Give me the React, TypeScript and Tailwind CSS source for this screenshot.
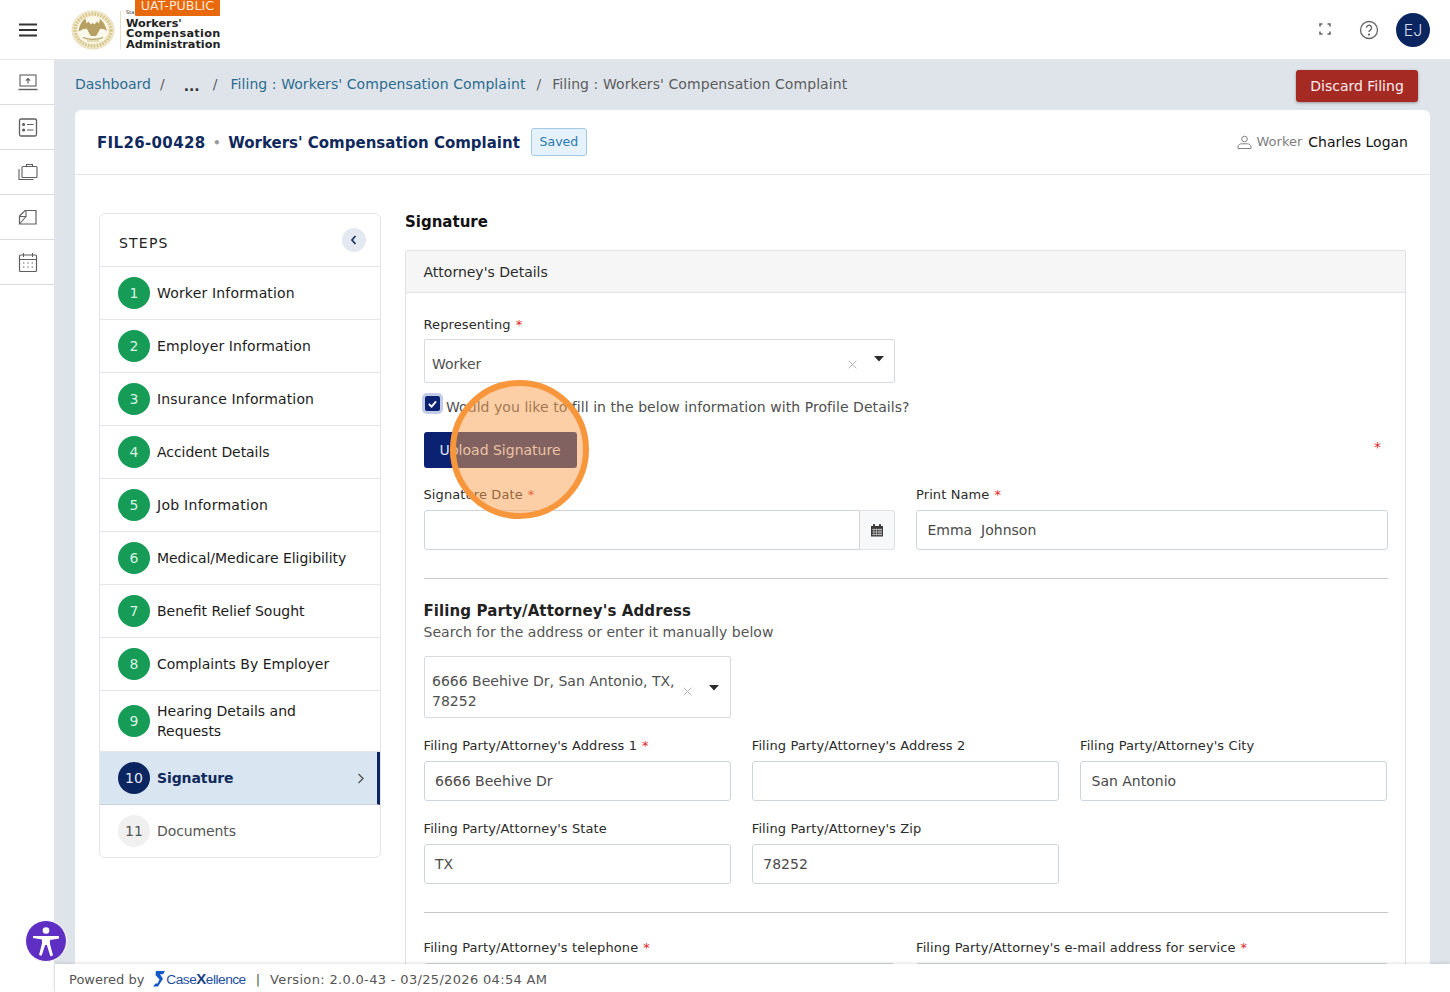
import React from "react";

const Star = () => <span className="text-[#dc2626] ml-[5px]">*</span>;

const Label = ({ children, req }: { children: React.ReactNode; req?: boolean }) => (
  <div className="text-[13px] leading-[18px] text-[#2b2b2b] tracking-[0.1px] h-[16px] whitespace-nowrap">
    {children}
    {req && <Star />}
  </div>
);

const Field = ({ label, value, req, w }: { label: string; value?: string; req?: boolean; w: string }) => (
  <div className={w}>
    <Label req={req}>{label}</Label>
    <div className="mt-[8px] h-[40px] border border-[#ced4da] rounded-[3px] bg-white flex items-center px-[10.500px] text-[14px] text-[#4a4a4a] whitespace-pre">
      {value}
    </div>
  </div>
);

const Caret = () => (
  <svg width="10" height="6" viewBox="0 0 10 6" className="shrink-0">
    <path d="M0 0h10L5 5.500z" fill="#2b2b2b" />
  </svg>
);

const Cross = () => (
  <svg width="9" height="9" viewBox="0 0 9 9" className="shrink-0">
    <path d="M.7.7l7.600 7.600M8.300.7L.7 8.300" stroke="#b5b5b5" strokeWidth="1" fill="none" />
  </svg>
);

const steps: { n: number; t: string; c: string }[] = [
  { n: 1, t: "Worker Information", c: "tracking-[0.17px]" },
  { n: 2, t: "Employer Information", c: "tracking-[0.1px]" },
  { n: 3, t: "Insurance Information", c: "tracking-[0.14px]" },
  { n: 4, t: "Accident Details", c: "tracking-[-0.06px]" },
  { n: 5, t: "Job Information", c: "tracking-[0.27px]" },
  { n: 6, t: "Medical/Medicare Eligibility", c: "tracking-[-0.04px]" },
  { n: 7, t: "Benefit Relief Sought", c: "" },
  { n: 8, t: "Complaints By Employer", c: "" },
];

const Num = ({ n, cls }: { n: number; cls: string }) => (
  <div className={`w-[32px] h-[32px] rounded-full flex items-center justify-center text-[14px] shrink-0 ${cls}`}>{n}</div>
);

const RailIcon = ({ children }: { children: React.ReactNode }) => (
  <div className="h-[45px] border-b border-[#d8dce0] flex items-center justify-center pl-[1px]">{children}</div>
);

const iconProps = { width: 22, height: 22, viewBox: "0 0 22 22", fill: "none", stroke: "#5f5f5f", strokeWidth: 1.1 };

export default function App() {
  return (
    <div className="relative h-[992px] w-[1450px] overflow-hidden bg-white flex flex-col font-['DejaVu_Sans',sans-serif]">
      <header className="h-[60px] shrink-0 border-b border-[#e3e6ea] flex items-center bg-white shadow-[0_1px_2px_rgba(0,0,0,0.04)]">
        <div className="w-[55px] flex justify-center">
          <svg width="20" height="14" viewBox="0 0 20 14">
            <path d="M1 1.500h18M1 7h18M1 12.500h18" stroke="#333" strokeWidth="2" />
          </svg>
        </div>
        <div className="flex items-center ml-[16px] relative h-[60px]">
          <svg width="44" height="40" viewBox="0 0 44 40">
            <ellipse cx="22" cy="20" rx="21" ry="19" fill="#f5efd9" stroke="#e8dcb4" strokeWidth="1" />
            <ellipse cx="22" cy="20" rx="18" ry="16" fill="none" stroke="#d9c98f" strokeWidth="3.500" strokeDasharray="2 1" />
            <ellipse cx="22" cy="20" rx="15" ry="13.500" fill="#fbf8ec" />
            <path d="M7.500 21c1-6 4-11 7-12.500l1 5 2-2 2.500 3 1.500-1.500 2 1.500 2.500-3 2 2 1-4.500c3 2 5.500 6 7 12-3-2-5-2.500-7-2l-2 4-2 3h-5l-2-3-2-4c-2-.5-4.500 0-7 2z" fill="#b7a162" />
            <path d="M12 27.500c5 2.500 15 2.500 20 0" stroke="#b7a162" strokeWidth="1.300" fill="none" />
            <path d="M16 31h12" stroke="#d9c98f" strokeWidth="1.200" />
          </svg>
          <div className="w-px h-[38px] bg-[#e6dfc8] ml-[5px]" />
          <div className="ml-[5px] mt-[10px] text-[11.250px] leading-[10.500px] font-bold text-[#222] relative">
            <div className="absolute left-0 top-[-10px] text-[5px] leading-[6px] font-normal">Sta</div>
            <div>Workers'</div>
            <div className="tracking-[0.33px]">Compensation</div>
            <div>Administration</div>
          </div>
          <div className="absolute left-[64px] top-0 w-[85px] h-[16px] bg-[#e8680c] text-[#ffe9d6] text-[12.700px] leading-[10px] pt-[1px] flex items-start justify-center rounded-b-[1px]">
            UAT-PUBLIC
          </div>
        </div>
        <div className="ml-auto flex items-center pr-[20px]">
          <svg width="14" height="14" viewBox="0 0 14 14" fill="none" stroke="#666" strokeWidth="1.600" className="mr-[27px] -mt-[2px]">
            <path d="M2 4.500V2h2.500M9.500 2H12v2.500M12 9.500V12H9.500M4.500 12H2V9.500" />
          </svg>
          <svg width="20" height="20" viewBox="0 0 20 20" fill="none" stroke="#666" strokeWidth="1.300" className="mr-[17px]">
            <circle cx="10" cy="10" r="8.500" />
            <path d="M7.400 7.800a2.600 2.600 0 1 1 3.900 2.300c-.9.500-1.300 1-1.300 2" />
            <circle cx="10" cy="14.600" r="0.500" fill="#666" />
          </svg>
          <div className="w-[34px] h-[34px] rounded-full bg-[#0b2560] text-[#d5dcea] text-[16px] font-light font-['Inter',sans-serif] flex items-center justify-center">EJ</div>
        </div>
      </header>

      <div className="flex-1 flex min-h-0">
        <aside className="w-[54px] shrink-0 bg-white">
          <RailIcon>
            <svg {...iconProps}>
              <rect x="3" y="4" width="16" height="11" />
              <path d="M1.500 18.500h19" strokeWidth="1.400" />
              <path d="M11 12.500V7.500M8.800 9.600L11 7.500l2.200 2.100" strokeWidth="1.200" />
            </svg>
          </RailIcon>
          <RailIcon>
            <svg {...iconProps}>
              <rect x="2.500" y="3" width="17" height="17" rx="1.500" strokeWidth="1.300" />
              <path d="M10 8.500h6.500M10 14h6.500" />
              <circle cx="6.600" cy="8.500" r="1" fill="#5f5f5f" />
              <circle cx="6.600" cy="14" r="1" fill="#5f5f5f" />
            </svg>
          </RailIcon>
          <RailIcon>
            <svg {...iconProps}>
              <rect x="5" y="5.500" width="15" height="11" rx="1" />
              <path d="M9.500 5.500V3.500h6v2M2 8v10.500h14.500" />
            </svg>
          </RailIcon>
          <RailIcon>
            <svg {...iconProps}>
              <path d="M8 4.500h11V18H2.500V10z" strokeWidth="1.200" />
              <path d="M2.500 10.500h6.500V4.500M3 17.500L9 10.500" />
            </svg>
          </RailIcon>
          <RailIcon>
            <svg {...iconProps}>
              <rect x="2.500" y="4" width="17" height="16.500" rx="1" strokeWidth="1.200" />
              <path d="M2.500 8.500h17M6.500 2v4M15.500 2v4" />
              <path d="M6 12h1.400M10.300 12h1.400M14.600 12h1.400M6 16h1.400M10.300 16h1.400M14.600 16h1.400" strokeDasharray="1.400" />
            </svg>
          </RailIcon>
        </aside>

        <div className="flex-1 min-w-0 flex flex-col">
          <main className="flex-1 min-h-0 overflow-hidden bg-[#dfe4eb] pl-[21px] pr-[20px]">
            <div className="h-[50px] flex items-center text-[14px] text-[#5c5c5c] whitespace-nowrap">
              <div className="flex items-center mb-[2px]">
                <span className="text-[#2b6c8f]">Dashboard</span>
                <span className="ml-[9px]">/</span>
                <span className="ml-[19px] font-bold text-[#333] leading-[14px] mt-[3px]">...</span>
                <span className="ml-[13px]">/</span>
                <span className="ml-[13px] text-[#2b6c8f] tracking-[0.075px]">Filing : Workers' Compensation Complaint</span>
                <span className="ml-[11px]">/</span>
                <span className="ml-[11px] tracking-[0.075px]">Filing : Workers' Compensation Complaint</span>
              </div>
              <button className="ml-auto mr-[12px] mt-[2px] w-[122px] h-[32px] bg-[#a52a24] text-[#fbeeee] rounded-[3px] text-[14px] shadow-[0_1px_3px_rgba(0,0,0,0.35)]">
                Discard Filing
              </button>
            </div>

            <div className="bg-white rounded-t-[6px] h-[900px]">
              <div className="h-[65px] border-b border-[#e4e6e9] flex items-center pl-[22px] pr-[22px]">
                <span className="text-[15px] font-bold text-[#10295c] tracking-[0.35px] mt-[2px]">FIL26-00428</span>
                <span className="mx-[7.500px] text-[#999] text-[12px] font-bold mt-[2px]">•</span>
                <span className="text-[15px] font-bold text-[#10295c] mt-[2px]">Workers' Compensation Complaint</span>
                <span className="ml-[11px] h-[28px] w-[56px] flex items-center justify-center bg-[#e6f2fb] border border-[#a3cbe6] rounded-[3px] text-[12.500px] text-[#2a78b0]">
                  Saved
                </span>
                <div className="ml-auto flex items-center">
                  <svg width="15" height="15" viewBox="0 0 15 15" fill="none" stroke="#808080" strokeWidth="1" className="mr-[4px]">
                    <circle cx="7.500" cy="4" r="2.800" />
                    <path d="M1 13.500v-1.500c0-2 2-3.200 3.500-3.200h6c1.500 0 3.500 1.200 3.500 3.200v1.500z" />
                  </svg>
                  <span className="text-[13px] text-[#808080]">Worker</span>
                  <span className="ml-[6px] text-[14px] text-[#111]">Charles Logan</span>
                </div>
              </div>

              <div className="flex pl-[24px] pr-[24px] pt-[38px]">
                <div className="w-[282px] shrink-0">
                  <div className="border border-[#e3e5e8] rounded-[6px] bg-white">
                    <div className="h-[53px] border-b border-[#e3e5e8] flex items-center justify-between pl-[19px] pr-[14px]">
                      <span className="text-[14px] tracking-[1.200px] text-[#222] mt-[7px]">STEPS</span>
                      <div className="w-[24px] h-[24px] rounded-full bg-[#e4e8f0] flex items-center justify-center mb-[1px]">
                        <svg width="8" height="10" viewBox="0 0 8 10" fill="none" stroke="#1c3160" strokeWidth="1.700">
                          <path d="M5.500 1L2 5l3.500 4" />
                        </svg>
                      </div>
                    </div>
                    {steps.map((s) => (
                      <div key={s.n} className="h-[53px] border-b border-[#e3e5e8] flex items-center pl-[18px] gap-[7px]">
                        <Num n={s.n} cls="bg-[#169c57] text-[#d9f2e4]" />
                        <span className={`text-[14px] text-[#1c1c1c] ${s.c}`}>{s.t}</span>
                      </div>
                    ))}
                    <div className="h-[61px] border-b border-[#e3e5e8] flex items-center pl-[18px] gap-[7px]">
                      <Num n={9} cls="bg-[#169c57] text-[#d9f2e4]" />
                      <span className="text-[14px] leading-[20px] text-[#1c1c1c] w-[160px]">Hearing Details and Requests</span>
                    </div>
                    <div className="h-[53px] border-b border-[#c9d3df] flex items-center pl-[18px] gap-[7px] bg-[#d9e5f1] border-r-[3px] border-r-[#0b2560]">
                      <Num n={10} cls="bg-[#0b2560] text-[#e6ebf5]" />
                      <span className="text-[14px] font-bold text-[#10295c] tracking-[-0.1px]">Signature</span>
                      <svg width="8" height="11" viewBox="0 0 8 11" fill="none" stroke="#555" strokeWidth="1.400" className="ml-auto mr-[12px]">
                        <path d="M1.500 1l4.500 4.500L1.500 10" />
                      </svg>
                    </div>
                    <div className="h-[52px] flex items-center pl-[18px] gap-[7px]">
                      <Num n={11} cls="bg-[#f0f0f0] text-[#555]" />
                      <span className="text-[14px] text-[#555] tracking-[-0.1px]">Documents</span>
                    </div>
                  </div>
                </div>

                <div className="ml-[24px] w-[1001px]">
                  <h2 className="text-[15px] leading-[20px] font-bold text-[#111] h-[38px] -mt-[1px]">Signature</h2>
                  <div className="border border-[#e0e2e5] rounded-[2px]">
                    <div className="h-[42px] bg-[#f6f6f6] border-b border-[#e0e2e5] flex items-center pl-[17.500px] pt-[2px] text-[14px] text-[#2b2b2b]">
                      Attorney's Details
                    </div>
                    <div className="pl-[17.500px] pr-[17px] pt-[23px]">
                      <Label req>Representing</Label>
                      <div className="mt-[7px] w-[471.500px] h-[44px] border border-[#d8dbde] rounded-[2px] flex items-center pl-[7.500px] pr-[10px] text-[14px] text-[#4f4f4f]">
                        <span className="mt-[7px]">Worker</span>
                        <span className="ml-auto mr-[17px] mt-[7px]"><Cross /></span>
                        <span className="-mt-[4px]"><Caret /></span>
                      </div>
                      <div className="mt-[14px] h-[20px] flex items-center">
                        <div className="w-[21px] h-[21px] -ml-[2px] shrink-0 rounded-[5px] bg-[#0b2272] border-[3px] border-[#c3cbe8] flex items-center justify-center -mt-[7px]">
                          <svg width="9" height="8" viewBox="0 0 10 8" fill="none" stroke="white" strokeWidth="2">
                            <path d="M1 4l3 3 5-6" />
                          </svg>
                        </div>
                        <span className="ml-[3.500px] text-[14px] text-[#4f4f4f] whitespace-nowrap tracking-[0.055px]">Would you like to fill in the below information with Profile Details?</span>
                      </div>
                      <div className="mt-[15px] h-[36px] flex items-start">
                        <button className="w-[153px] h-[36px] bg-[#0b2272] text-[#dfe4f2] rounded-[3px] text-[14px]">Upload Signature</button>
                        <span className="ml-auto mr-[7px] mt-[5px] text-[14px] text-[#dc2626]">*</span>
                      </div>
                      <div className="mt-[18px] flex gap-[21px]">
                        <div className="w-[471.500px]">
                          <Label req>Signature Date</Label>
                          <div className="mt-[8px] h-[40px] flex">
                            <div className="flex-1 border border-[#ced4da] rounded-l-[3px]" />
                            <div className="w-[35px] border border-l-0 border-[#e0e2e5] bg-[#f7f8f9] flex items-center justify-center rounded-r-[3px]">
                              <svg width="14" height="14" viewBox="0 0 14 14">
                                <path d="M1 3h12v10.500H1z" fill="#3a3a3a" />
                                <rect x="3" y="1" width="2" height="3" rx="0.800" fill="#3a3a3a" />
                                <rect x="9" y="1" width="2" height="3" rx="0.800" fill="#3a3a3a" />
                                <path d="M2 6.500h10M2 9h10M2 11.500h10M4 5.500v7M6.500 5.500v7M9 5.500v7M11 5.500v7" stroke="#e8e8e8" strokeWidth="0.600" />
                              </svg>
                            </div>
                          </div>
                        </div>
                        <Field w="w-[472px]" label="Print Name" value="Emma  Johnson" req />
                      </div>
                      <hr className="mt-[28px] border-[#c9c9c9]" />
                      <div className="mt-[22px] text-[15px] leading-[20px] font-bold text-[#222] tracking-[0.1px]">Filing Party/Attorney's Address</div>
                      <div className="mt-[1px] text-[14px] leading-[20px] text-[#555] tracking-[0.04px]">Search for the address or enter it manually below</div>
                      <div className="mt-[14px] w-[307.500px] h-[62px] border border-[#d8dbde] rounded-[2px] flex items-center pl-[7.500px] pr-[11px] text-[14px] leading-[20px] text-[#4f4f4f]">
                        <span className="w-[250px] shrink-0 mt-[8px]">6666 Beehive Dr, San Antonio, TX, 78252</span>
                        <span className="ml-auto mr-[17px] mt-[8px]"><Cross /></span>
                        <span className="mt-[2px]"><Caret /></span>
                      </div>
                      <div className="mt-[19px] grid grid-cols-[307.250px_307.250px_307.250px] gap-x-[21px] gap-y-[19px]">
                        <Field w="" label="Filing Party/Attorney's Address 1" value="6666 Beehive Dr" req />
                        <Field w="" label="Filing Party/Attorney's Address 2" />
                        <Field w="" label="Filing Party/Attorney's City" value="San Antonio" />
                        <Field w="" label="Filing Party/Attorney's State" value="TX" />
                        <Field w="" label="Filing Party/Attorney's Zip" value="78252" />
                      </div>
                      <hr className="mt-[28px] border-[#c9c9c9]" />
                      <div className="mt-[26px] flex gap-[21px]">
                        <Field w="w-[471.500px]" label="Filing Party/Attorney's telephone" req />
                        <Field w="w-[472px]" label="Filing Party/Attorney's e-mail address for service" req />
                      </div>
                    </div>
                  </div>
                </div>
              </div>
            </div>
          </main>
          <footer className="relative h-[28px] shrink-0 bg-white border-l border-[#e3e6ea] shadow-[0_-1px_3px_rgba(0,0,0,0.12)] flex items-center pl-[14px] pt-[3px] text-[13px] text-[#555] whitespace-nowrap">
            <span>Powered by</span>
            <svg width="12" height="16" viewBox="0 0 12 16" className="ml-[9px] -mt-[2px]">
              <path d="M3 0h9l-2 3.300H7L10 7.800 5 15.500H0l2.500-3H4.500L6.500 8.500 2.500 4z" fill="#1457c8" />
            </svg>
            <span className="ml-[1px] text-[13.700px] tracking-[-0.5px] font-['Liberation_Sans',sans-serif] text-[#1d4f9e]">
              Case<span className="font-bold text-[15px] text-[#1a3f86]">X</span>ellence
            </span>
            <span className="ml-[10px]">|</span>
            <span className="ml-[10px] tracking-[0.33px]">Version: 2.0.0-43 - 03/25/2026 04:54 AM</span>
          </footer>
        </div>
      </div>

      <div className="absolute left-[25px] top-[920px] w-[42px] h-[42px] rounded-full bg-[#5f2fc4] border border-white flex items-center justify-center">
        <svg width="28" height="32" viewBox="0 0 28 32" fill="white">
          <circle cx="14" cy="5.500" r="3.300" />
          <path d="M1 11h26v2.500l-9 1.500v4l3 11.500-2.600.7L14.800 20h-1.600l-3.600 10.700-2.600-.7 3-11.500v-4l-9-1.500z" />
        </svg>
      </div>

      <div className="absolute left-[450px] top-[380px] w-[139px] h-[139px] rounded-full border-[6px] border-[#f8963c] bg-[#f9a050]/50" />
    </div>
  );
}
